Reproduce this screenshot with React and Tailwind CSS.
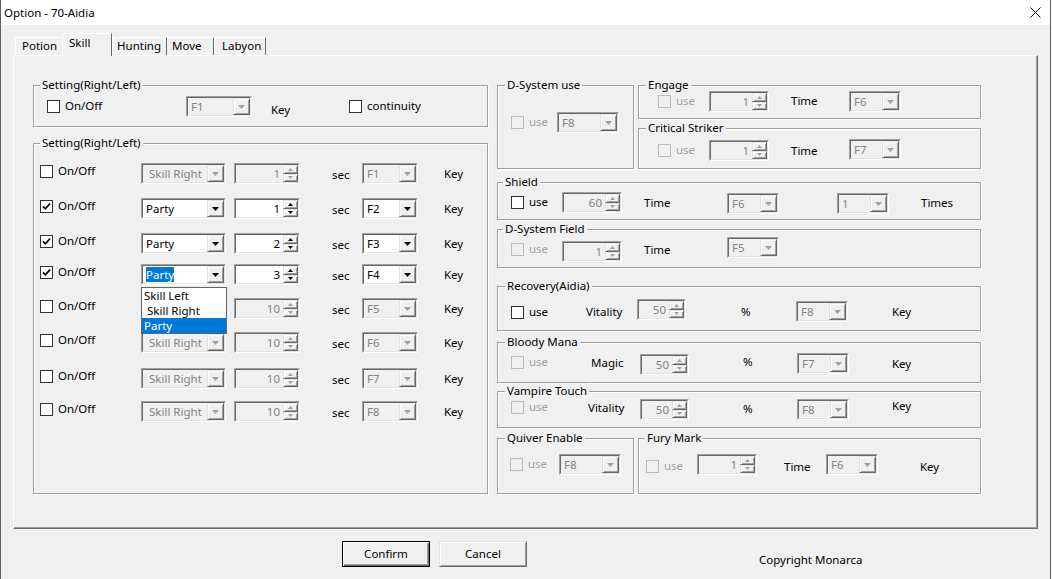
import React from "react";

const FONT = "font-['Segoe_UI','Noto_Sans',sans-serif]";

function DropBtn({ disabled }) {
  return (
    <div className="w-[17px] h-full shrink-0 flex items-center justify-center bg-[#f0f0f0] border border-t-[#e3e3e3] border-l-[#e3e3e3] border-b-[#696969] border-r-[#696969] shadow-[inset_1px_1px_0_#ffffff,inset_-1px_-1px_0_#a0a0a0]">
      <svg width="7" height="4" viewBox="0 0 7 4">
        <path d="M0 0H7L3.5 4Z" fill={disabled ? "#a0a0a0" : "#000000"} />
      </svg>
    </div>
  );
}

function UDBtn({ up, disabled }) {
  return (
    <div className="flex-1 flex items-center justify-center bg-[#f0f0f0] border border-t-[#e3e3e3] border-l-[#e3e3e3] border-b-[#696969] border-r-[#696969] shadow-[inset_1px_1px_0_#ffffff,inset_-1px_-1px_0_#a0a0a0]">
      <svg width="5" height="3" viewBox="0 0 5 3">
        <path d={up ? "M0 3H5L2.5 0Z" : "M0 0H5L2.5 3Z"} fill={disabled ? "#a0a0a0" : "#000000"} />
      </svg>
    </div>
  );
}

function Sunken({ className = "", disabled, children }) {
  return (
    <div className={`h-[21px] shrink-0 border border-t-[#a0a0a0] border-l-[#a0a0a0] border-b-white border-r-white ${className}`}>
      <div className={`h-full flex border border-t-[#696969] border-l-[#696969] border-b-[#e3e3e3] border-r-[#e3e3e3] ${disabled ? "bg-[#f0f0f0]" : "bg-white"}`}>
        {children}
      </div>
    </div>
  );
}

function Combo({ value, w, disabled, highlight }) {
  return (
    <Sunken className={w} disabled={disabled}>
      <div className={`flex-1 flex items-center pl-[3px] whitespace-pre text-[11.5px] leading-[15px] overflow-hidden ${disabled ? "text-[#838383]" : "text-black"}`}>
        {highlight ? <span className="bg-[#0078d7] text-white">{value}</span> : value}
      </div>
      <DropBtn disabled={disabled} />
    </Sunken>
  );
}

function Spin({ value, w, disabled }) {
  return (
    <Sunken className={w} disabled={disabled}>
      <div className={`flex-1 flex items-center justify-end pr-[3px] text-[11.5px] leading-[15px] ${disabled ? "text-[#838383]" : "text-black"}`}>
        {value}
      </div>
      <div className="w-[15px] shrink-0 flex flex-col">
        <UDBtn up disabled={disabled} />
        <UDBtn disabled={disabled} />
      </div>
    </Sunken>
  );
}

function Check({ checked, disabled, label }) {
  return (
    <div className="flex items-center gap-[5px] h-[16px]">
      <div
        className={`w-[13px] h-[13px] shrink-0 border flex items-center justify-center ${
          disabled ? "border-[#bcbcbc] bg-[#f0f0f0]" : "border-[#333333] bg-white"
        }`}
      >
        {checked && (
          <svg width="9" height="9" viewBox="0 0 9 9">
            <path d="M1 4.3L3.4 6.8L8 1.6" fill="none" stroke="#000000" strokeWidth="1.7" />
          </svg>
        )}
      </div>
      {label && (
        <span className={`text-[11.5px] leading-[16px] whitespace-nowrap ${disabled ? "text-[#a0a0a0]" : "text-black"}`}>{label}</span>
      )}
    </div>
  );
}

function Group({ title, className = "", lx = "left-[6px]", children }) {
  return (
    <div className={`relative shrink-0 border border-[#a0a0a0] shadow-[inset_1px_1px_0_#ffffff,1px_1px_0_#ffffff] ${className}`}>
      <span className={`absolute -top-[9px] ${lx} px-[2px] bg-[#f0f0f0] text-[11.5px] leading-[16px] whitespace-nowrap`}>{title}</span>
      {children}
    </div>
  );
}

const T = ({ className = "", children }) => (
  <span className={`shrink-0 text-[11.5px] leading-[16px] whitespace-nowrap ${className}`}>{children}</span>
);

const rows = [
  { mt: "mt-[19px]", checked: false, combo: " Skill Right", spin: "1", key: "F1", on: false },
  { mt: "mt-[14px]", checked: true, combo: "Party", spin: "1", key: "F2", on: true },
  { mt: "mt-[14px]", checked: true, combo: "Party", spin: "2", key: "F3", on: true },
  { mt: "mt-[10px]", checked: true, combo: "Party", spin: "3", key: "F4", on: true, open: true },
  { mt: "mt-[13px]", checked: false, combo: " Skill Right", spin: "10", key: "F5", on: false },
  { mt: "mt-[13px]", checked: false, combo: " Skill Right", spin: "10", key: "F6", on: false },
  { mt: "mt-[15px]", checked: false, combo: " Skill Right", spin: "10", key: "F7", on: false },
  { mt: "mt-[12px]", checked: false, combo: " Skill Right", spin: "10", key: "F8", on: false },
];

function Tab({ className, children }) {
  return <div className={`shrink-0 flex text-[11.5px] leading-[16px] bg-[#f0f0f0] ${className}`}>{children}</div>;
}

export default function App() {
  return (
    <div className={`w-[1051px] h-[579px] bg-[#f0f0f0] border-l border-r border-[#5f5f5f] flex flex-col text-[11.5px] text-black overflow-hidden ${FONT}`}>
      {/* Title bar */}
      <div className="h-[25px] shrink-0 bg-white flex items-center justify-between pl-[3px] pr-[9px]">
        <span className="text-[11.5px] leading-[16px]">Option - 70-Aidia</span>
        <svg width="11" height="11" viewBox="0 0 11 11">
          <path d="M0.5 0.5L10.5 10.5M10.5 0.5L0.5 10.5" stroke="#000000" strokeWidth="1" />
        </svg>
      </div>

      {/* Tabs */}
      <div className="h-[30px] shrink-0 flex items-end pl-[14px] relative z-10">
        <Tab className="w-[47px] h-[18px] pl-[6px] border-t border-l border-white">Potion</Tab>
        <Tab className="w-[50px] h-[23px] -mb-[1px] pl-[6px] pt-[1px] border-t border-l border-r border-t-white border-l-white border-r-[#696969]">Skill</Tab>
        <Tab className="w-[55px] h-[18px] pl-[4px] border-t border-l border-r border-t-white border-l-white border-r-[#696969]">Hunting</Tab>
        <Tab className="w-[47px] h-[18px] pl-[5px] border-t border-r border-t-white border-r-[#696969]">Move</Tab>
        <Tab className="w-[52px] h-[18px] pl-[7px] border-t border-l border-r border-t-white border-l-white border-r-[#696969]">Labyon</Tab>
      </div>

      {/* Panel */}
      <div className="ml-[12px] w-[1025px] h-[474px] shrink-0 border border-t-white border-l-white border-r-[#696969] border-b-[#696969] shadow-[inset_-1px_-1px_0_#a0a0a0] flex items-start pl-[19px] pt-[29px] gap-[9px]">
        {/* Left column */}
        <div className="w-[455px] shrink-0 flex flex-col">
          <Group title="Setting(Right/Left)" className="h-[42px]">
            <div className="flex items-start pl-[13px]">
              <div className="w-[139px] mt-[12px]">
                <Check label="On/Off" />
              </div>
              <div className="mt-[10px]">
                <Combo w="w-[66px]" value="F1" disabled />
              </div>
              <T className="ml-[19px] w-[78px] mt-[16px]">Key</T>
              <div className="mt-[12px]">
                <Check label="continuity" />
              </div>
            </div>
          </Group>

          <Group title="Setting(Right/Left)" className="mt-[16px] h-[351px]">
            {rows.map((r, i) => (
              <div key={i} className={`flex items-center h-[21px] pl-[6px] ${r.mt}`}>
                <div className="w-[101px] mb-[5px]">
                  <Check label="On/Off" checked={r.checked} />
                </div>
                <div className="relative">
                  <Combo w="w-[85px]" value={r.combo} disabled={!r.on} highlight={r.open} />
                  {r.open && (
                    <div className="absolute left-0 top-[23px] w-[86px] h-[47px] z-20 bg-white border border-[#646464] flex flex-col text-[11.5px]">
                      <div className="h-[15px] leading-[15px] pl-[2px]">Skill Left</div>
                      <div className="h-[15px] leading-[15px] pl-[2px] whitespace-pre"> Skill Right</div>
                      <div className="h-[15px] leading-[15px] pl-[2px] bg-[#0078d7] text-white">Party</div>
                    </div>
                  )}
                </div>
                <div className="ml-[8px]">
                  <Spin w="w-[66px]" value={r.spin} disabled={!r.on} />
                </div>
                <T className="ml-[32px] w-[30px] mt-[3px]">sec</T>
                <Combo w="w-[56px]" value={r.key} disabled={!r.on} />
                <T className="ml-[26px] mt-[1px]">Key</T>
              </div>
            ))}
          </Group>
        </div>

        {/* Right column */}
        <div className="w-[484px] shrink-0 flex flex-col">
          <div className="flex items-start">
            <Group title="D-System use" className="w-[137px] h-[84px]" lx="left-[7px]">
              <div className="flex items-start pl-[13px]">
                <div className="w-[46px] mt-[28px]">
                  <Check label="use" disabled />
                </div>
                <div className="mt-[26px]">
                  <Combo w="w-[62px]" value="F8" disabled />
                </div>
              </div>
            </Group>
            <div className="ml-[4px] w-[343px] flex flex-col">
              <Group title="Engage" className="h-[34px]" lx="left-[7px]">
                <div className="flex items-start pl-[19px]">
                  <div className="w-[51px] mt-[7px]">
                    <Check label="use" disabled />
                  </div>
                  <div className="mt-[5px]">
                    <Spin w="w-[60px]" value="1" disabled />
                  </div>
                  <T className="ml-[22px] w-[58px] mt-[7px]">Time</T>
                  <div className="mt-[5px]">
                    <Combo w="w-[52px]" value="F6" disabled />
                  </div>
                </div>
              </Group>
              <Group title="Critical Striker" className="mt-[9px] h-[41px]" lx="left-[7px]">
                <div className="flex items-start pl-[19px]">
                  <div className="w-[51px] mt-[13px]">
                    <Check label="use" disabled />
                  </div>
                  <div className="mt-[11px]">
                    <Spin w="w-[60px]" value="1" disabled />
                  </div>
                  <T className="ml-[22px] w-[58px] mt-[14px]">Time</T>
                  <div className="mt-[10px]">
                    <Combo w="w-[52px]" value="F7" disabled />
                  </div>
                </div>
              </Group>
            </div>
          </div>

          <Group title="Shield" className="mt-[13px] h-[38px]" lx="left-[5px]">
            <div className="flex items-start pl-[13px]">
              <div className="w-[51px] mt-[11px]">
                <Check label="use" />
              </div>
              <div className="mt-[9px]">
                <Spin w="w-[60px]" value="60" disabled />
              </div>
              <T className="ml-[22px] w-[83px] mt-[12px]">Time</T>
              <div className="mt-[10px]">
                <Combo w="w-[52px]" value="F6" disabled />
              </div>
              <div className="ml-[58px] mt-[10px]">
                <Combo w="w-[52px]" value="1" disabled />
              </div>
              <T className="ml-[32px] mt-[12px]">Times</T>
            </div>
          </Group>

          <Group title="D-System Field" className="mt-[9px] h-[39px]" lx="left-[5px]">
            <div className="flex items-start pl-[13px]">
              <div className="w-[51px] mt-[11px]">
                <Check label="use" disabled />
              </div>
              <div className="mt-[11px]">
                <Spin w="w-[60px]" value="1" disabled />
              </div>
              <T className="ml-[22px] w-[83px] mt-[12px]">Time</T>
              <div className="mt-[7px]">
                <Combo w="w-[52px]" value="F5" disabled />
              </div>
            </div>
          </Group>

          <Group title="Recovery(Aidia)" className="mt-[18px] h-[45px]" lx="left-[7px]">
            <div className="flex items-start pl-[13px]">
              <div className="w-[75px] mt-[17px]">
                <Check label="use" />
              </div>
              <T className="w-[51px] mt-[17px]">Vitality</T>
              <div className="mt-[12px]">
                <Spin w="w-[49px]" value="50" disabled />
              </div>
              <T className="ml-[55px] w-[55px] mt-[17px]">%</T>
              <div className="mt-[14px]">
                <Combo w="w-[52px]" value="F8" disabled />
              </div>
              <T className="ml-[44px] mt-[17px]">Key</T>
            </div>
          </Group>

          <Group title="Bloody Mana" className="mt-[11px] h-[41px]" lx="left-[7px]">
            <div className="flex items-start pl-[13px]">
              <div className="w-[80px] mt-[11px]">
                <Check label="use" disabled />
              </div>
              <T className="w-[49px] mt-[12px]">Magic</T>
              <div className="mt-[11px]">
                <Spin w="w-[49px]" value="50" disabled />
              </div>
              <T className="ml-[54px] w-[54px] mt-[11px]">%</T>
              <div className="mt-[10px]">
                <Combo w="w-[52px]" value="F7" disabled />
              </div>
              <T className="ml-[43px] mt-[13px]">Key</T>
            </div>
          </Group>

          <Group title="Vampire Touch" className="mt-[8px] h-[37px]" lx="left-[7px]">
            <div className="flex items-start pl-[13px]">
              <div className="w-[77px] mt-[7px]">
                <Check label="use" disabled />
              </div>
              <T className="w-[52px] mt-[8px]">Vitality</T>
              <div className="mt-[7px]">
                <Spin w="w-[49px]" value="50" disabled />
              </div>
              <T className="ml-[54px] w-[54px] mt-[9px]">%</T>
              <div className="mt-[7px]">
                <Combo w="w-[52px]" value="F8" disabled />
              </div>
              <T className="ml-[43px] mt-[6px]">Key</T>
            </div>
          </Group>

          <div className="mt-[10px] flex items-start">
            <Group title="Quiver Enable" className="w-[137px] h-[56px]" lx="left-[7px]">
              <div className="flex items-start pl-[12px]">
                <div className="w-[49px] mt-[17px]">
                  <Check label="use" disabled />
                </div>
                <div className="mt-[15px]">
                  <Combo w="w-[62px]" value="F8" disabled />
                </div>
              </div>
            </Group>
            <Group title="Fury Mark" className="ml-[4px] w-[343px] h-[56px]" lx="left-[6px]">
              <div className="flex items-start pl-[7px]">
                <div className="w-[51px] mt-[19px]">
                  <Check label="use" disabled />
                </div>
                <div className="mt-[15px]">
                  <Spin w="w-[60px]" value="1" disabled />
                </div>
                <T className="ml-[27px] w-[42px] mt-[20px]">Time</T>
                <div className="mt-[15px]">
                  <Combo w="w-[52px]" value="F6" disabled />
                </div>
                <T className="ml-[42px] mt-[20px]">Key</T>
              </div>
            </Group>
          </div>
        </div>
      </div>

      {/* Buttons */}
      <div className="mt-[12px] flex items-start pl-[341px]">
        <button className="w-[88px] h-[26px] bg-[#f0f0f0] border border-black shadow-[inset_1px_1px_0_#ffffff,inset_-1px_-1px_0_#696969,inset_-2px_-2px_0_#a0a0a0] text-[11.5px] leading-[16px] flex items-center justify-center">
          Confirm
        </button>
        <button className="ml-[9px] w-[88px] h-[26px] bg-[#f0f0f0] border border-t-[#e3e3e3] border-l-[#e3e3e3] border-b-[#696969] border-r-[#696969] shadow-[inset_1px_1px_0_#ffffff,inset_-1px_-1px_0_#a0a0a0] text-[11.5px] leading-[16px] flex items-center justify-center">
          Cancel
        </button>
        <T className="ml-[232px] mt-[11px]">Copyright Monarca</T>
      </div>
    </div>
  );
}
